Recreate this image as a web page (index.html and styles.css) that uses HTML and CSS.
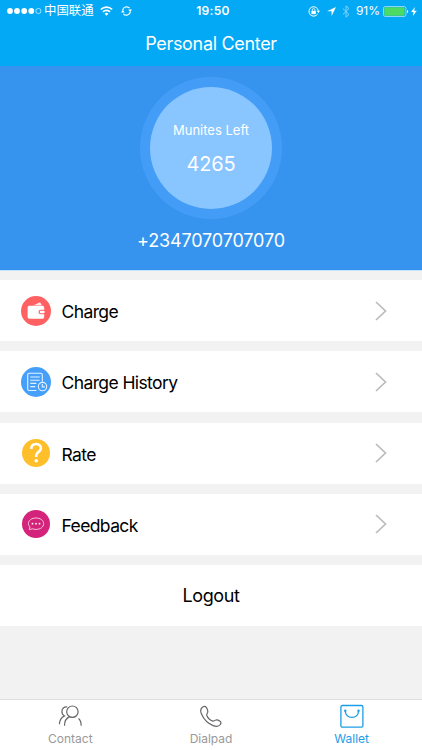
FILE: index.html
```html
<!DOCTYPE html>
<html lang="en">
<head>
    <meta charset="UTF-8">
    <meta name="viewport" content="width=device-width, initial-scale=1.0">
    <title>Personal Center</title>
    <link rel="stylesheet" href="styles.css">
</head>
<body>

<header class="header">
    <div class="status-bar">
        <div class="status-left">
            <svg class="signal" width="35" height="8" viewBox="0 0 35 8">
                <g fill="#fff">
                    <circle cx="3" cy="4" r="2.9"/>
                    <circle cx="10" cy="4" r="2.9"/>
                    <circle cx="17.2" cy="4" r="2.9"/>
                    <circle cx="24.3" cy="4" r="2.9"/>
                </g>
                <circle cx="31.4" cy="4" r="2.6" fill="none" stroke="#fff" stroke-width="0.6"/>
            </svg>
            <span class="carrier">中国联通</span>
            <svg class="wifi" width="13" height="10" viewBox="0 0 13 10">
                <g fill="none" stroke="#fff" stroke-width="1.7">
                    <path d="M0.8 3.5a8.2 8.2 0 0 1 11.4 0"/>
                    <path d="M2.9 5.9a5.1 5.1 0 0 1 7.2 0"/>
                </g>
                <path d="M6.5 9.7L4.6 7.7a2.7 2.7 0 0 1 3.8 0z" fill="#fff"/>
            </svg>
            <svg class="sync" width="11" height="10" viewBox="0 0 11 10">
                <g fill="none" stroke="#fff" stroke-width="1.2">
                    <path d="M1.6 4.3a4 4 0 0 1 7-2.100"/>
                    <path d="M9.400 5.700a4 4 0 0 1-7 2.100"/>
                </g>
                <path d="M7.2 3.600h3.800L9.200 6zM0 6.400h3.800L1.800 4z" fill="#fff"/>
            </svg>
        </div>
        <span class="time">19:50</span>
        <div class="status-right">
            <svg class="lock" width="12" height="11" viewBox="0 0 12 11">
                <path d="M9.600 8A4.700 4.700 0 1 1 10.300 4.800" fill="none" stroke="#fff" stroke-width="1"/>
                <path d="M8.600 4.800h3.400L10.300 7z" fill="#fff"/>
                <rect x="3.400" y="4.900" width="4.400" height="3.200" fill="#fff"/>
                <path d="M4.300 5V3.900a1.300 1.300 0 0 1 2.600 0V5" fill="none" stroke="#fff" stroke-width="0.8"/>
            </svg>
            <svg class="location" width="9" height="9" viewBox="0 0 9 9">
                <path d="M9 0L0 4.300h4.600V9z" fill="#fff"/>
            </svg>
            <svg class="bluetooth" width="8" height="13" viewBox="0 0 8 13">
                <path d="M0.8 3.500l6.200 6-3 2.700V0.800l3 2.700-6.200 6" fill="none" stroke="#fff" stroke-width="1"/>
            </svg>
            <span class="percent">91%</span>
            <svg class="battery" width="26" height="11" viewBox="0 0 26 11">
                <rect x="0.5" y="0.5" width="22.4" height="10" rx="1.8" fill="none" stroke="#c5eaff" stroke-width="0.7"/>
                <rect x="1.3" y="1.3" width="20.2" height="8.4" rx="1" fill="#4cd964"/>
                <path d="M24 3.700a2 2 0 0 1 0 3.600z" fill="#fff"/>
            </svg>
            <svg class="bolt" width="6" height="9" viewBox="0 0 6 9">
                <path d="M3.800 0L0.100 5h2.400L1.800 9l4-5.200H3.200z" fill="#fff"/>
            </svg>
        </div>
    </div>
    <h1 class="title">Personal Center</h1>
</header>

<section class="account">
    <div class="ring">
        <div class="balance">
            <span class="balance-label">Munites Left</span>
            <span class="balance-value">4265</span>
        </div>
    </div>
    <p class="phone">+2347070707070</p>
</section>

<main class="menu">
    <a class="row">
        <svg class="row-icon" viewBox="0 0 30 30">
            <circle cx="15" cy="15" r="15" fill="#ff6163"/>
            <path d="M12.500 9.200l6.500-3 1.900 3z" fill="#fff" opacity="0.85"/>
            <path d="M8.300 9.800h13.200a1.700 1.700 0 0 1 1.700 1.700v2.200h-3.400a2.300 2.300 0 0 0 0 4.600h3.400v2.800a1.700 1.700 0 0 1-1.700 1.700H8.300a1.700 1.700 0 0 1-1.700-1.700v-9.600a1.700 1.700 0 0 1 1.700-1.700z" fill="#fff"/>
            <rect x="18.700" y="14.700" width="5" height="2.600" rx="1.300" fill="#fff"/>
        </svg>
        <span class="row-text">Charge</span>
        <svg class="arrow" viewBox="0 0 12 20"><path d="M1 1l9.500 9L1 19"/></svg>
    </a>
    <a class="row">
        <svg class="row-icon" viewBox="0 0 30 30">
            <circle cx="15" cy="15" r="15" fill="#469ff9"/>
            <g fill="none" stroke="#e4f2ff" stroke-width="1.100">
                <path d="M15.500 23.500H8.200a1.500 1.500 0 0 1-1.500-1.500V7.700a1.500 1.500 0 0 1 1.500-1.500h11.600a1.500 1.500 0 0 1 1.500 1.500v7"/>
                <path d="M9.300 10h9.400M9.300 13.200h9.400M9.300 16.400h6M9.300 19.600h5"/>
                <circle cx="21.500" cy="19.600" r="4.200"/>
                <path d="M21.300 17v2.900h2.600"/>
            </g>
        </svg>
        <span class="row-text">Charge History</span>
        <svg class="arrow" viewBox="0 0 12 20"><path d="M1 1l9.500 9L1 19"/></svg>
    </a>
    <a class="row">
        <svg class="row-icon" viewBox="0 0 30 30">
            <circle cx="15" cy="15" r="14" fill="#ffbf2b"/>
            <path d="M10.300 11c0-3.400 2-5 4.800-5s4.800 1.700 4.800 4.300c0 3.600-4.700 3.800-4.700 7.300v1.400" fill="none" stroke="#fff" stroke-width="2.600"/>
            <circle cx="15.200" cy="22.800" r="1.800" fill="#fff"/>
        </svg>
        <span class="row-text">Rate</span>
        <svg class="arrow" viewBox="0 0 12 20"><path d="M1 1l9.500 9L1 19"/></svg>
    </a>
    <a class="row">
        <svg class="row-icon" viewBox="0 0 30 30">
            <circle cx="15" cy="15" r="14" fill="#d4237a"/>
            <path d="M8.400 20.600l.5-2.800C7.900 16.800 7.400 15.800 7.400 14.600 7.400 11.300 10.600 9 15 9s7.600 2.300 7.600 5.700S19.400 20.400 15 20.400c-1.300 0-2.400-.2-3.500-.6z" fill="none" stroke="#fbd5e7" stroke-width="0.9"/>
            <g fill="#fff">
                <circle cx="11.500" cy="14.700" r="0.900"/>
                <circle cx="15" cy="14.700" r="0.900"/>
                <circle cx="18.500" cy="14.700" r="0.900"/>
            </g>
        </svg>
        <span class="row-text">Feedback</span>
        <svg class="arrow" viewBox="0 0 12 20"><path d="M1 1l9.500 9L1 19"/></svg>
    </a>
    <a class="row logout">Logout</a>
</main>

<nav class="tab-bar">
    <a class="tab">
        <svg class="tab-icon" width="26" height="24" viewBox="0 0 26 24">
            <g fill="none" stroke="#666" stroke-width="1.2">
                <circle cx="15.400" cy="7.700" r="5.700"/>
                <path d="M10.200 3c-3.200-.5-5.300 1.600-5.300 4.400 0 2.200 1 3.600 2.600 4.500-3 1.400-4.900 4.300-5.100 8.400"/>
                <path d="M12.500 12.900c-3.300 1.200-5 4.300-5 8.900M21.600 14.500c1.700 1.500 2.600 4 2.600 7.300"/>
            </g>
        </svg>
        <span>Contact</span>
    </a>
    <a class="tab">
        <svg class="tab-icon" width="26" height="24" viewBox="0 0 26 24">
            <path d="M5 2.800C2.500 4.200 2 6.500 3.500 10c2.200 5 6.800 9.700 11.700 11.600 3.200 1.200 5.700.9 7.100-1.100 1-1.400.9-2.400-.3-3.300-1.500-1-2.900-1.500-4.200-1.200-1.300.2-1.700 1.500-3 1.100-2.400-.8-5-3.300-6-5.700-.5-1.300.6-1.900.9-3.200.3-1.500-.3-3.300-1.400-4.800C7.300 2 6.300 2 5 2.800z" fill="none" stroke="#666" stroke-width="1.2"/>
        </svg>
        <span>Dialpad</span>
    </a>
    <a class="tab active">
        <svg class="tab-icon" width="26" height="24" viewBox="0 0 26 24">
            <g fill="none" stroke="#1c9de8" stroke-width="1.300">
                <rect x="1.900" y="1.500" width="22" height="21.700" rx="1.500"/>
                <path d="M6.200 7c.4 3.900 3 6.400 6.700 6.400s6.300-2.500 6.700-6.400"/>
            </g>
            <circle cx="6.300" cy="6.700" r="1.200" fill="#1c9de8"/>
            <circle cx="19.500" cy="6.700" r="1.200" fill="#1c9de8"/>
        </svg>
        <span>Wallet</span>
    </a>
</nav>

</body>
</html>
```
FILE: styles.css
```css
body {
    margin: 0;
    height: 750px;
    display: flex;
    flex-direction: column;
    overflow: hidden;
    font-family: Inter, "Noto Sans CJK SC", sans-serif;
    background-color: #f2f2f2;
    color: #000;
}
svg {
    display: block;
    flex: none;
}
.header {
    height: 66px;
    background-color: #03a9f5;
    color: #fff;
}
.status-bar {
    height: 22px;
    display: grid;
    grid-template-columns: 1fr auto 1fr;
    align-items: center;
    padding: 0 5px 0 7px;
    font-size: 12px;
    line-height: 22px;
}
.status-left,
.status-right {
    display: flex;
    align-items: center;
}
.status-right {
    justify-content: flex-end;
}
.carrier {
    margin-left: 2px;
    font-size: 12.4px;
}
.wifi {
    margin-left: 6px;
}
.sync {
    margin-left: 8px;
}
.time {
    padding-left: 2px;
    font-weight: 600;
    letter-spacing: 0.3px;
}
.location {
    margin-left: 7px;
}
.bluetooth {
    margin-left: 6px;
    opacity: 0.5;
}
.percent {
    margin-left: 6px;
}
.battery {
    margin-left: 3px;
}
.bolt {
    margin-left: 2px;
}
.title {
    margin: 0;
    font-size: 18px;
    font-weight: 400;
    line-height: 43px;
    letter-spacing: -0.32px;
    text-align: center;
}
.account {
    height: 204px;
    display: flex;
    flex-direction: column;
    align-items: center;
    background-color: #3794ee;
    border-bottom: 1px solid #c5e2fc;
    color: #fff;
}
.ring {
    margin-top: 11px;
    padding: 10px;
    border-radius: 50%;
    background-color: #439df6;
}
.balance {
    width: 122px;
    height: 122px;
    display: flex;
    flex-direction: column;
    align-items: center;
    border-radius: 50%;
    background-color: #89c5ff;
}
.balance-label {
    margin-top: 33px;
    font-size: 13px;
    line-height: 20px;
}
.balance-value {
    margin-top: 9px;
    font-size: 20px;
    line-height: 30px;
    letter-spacing: -0.2px;
}
.phone {
    margin: 9px 0 0;
    font-size: 18px;
    line-height: 26px;
    letter-spacing: -0.15px;
}
.menu {
    display: flex;
    flex-direction: column;
    gap: 10.3px;
    padding-top: 9px;
}
.row {
    height: 61px;
    display: flex;
    align-items: center;
    padding: 0 35px 0 21px;
    background-color: #fff;
    font-size: 17.5px;
    letter-spacing: -0.6px;
}
.row-icon {
    width: 30px;
    height: 30px;
}
.row-text {
    flex: 1;
    margin-left: 10.5px;
    padding-top: 2px;
}
.arrow {
    width: 12px;
    height: 20px;
    fill: none;
    stroke: #bbb;
    stroke-width: 1.7;
}
.logout {
    justify-content: center;
    padding: 0;
    font-size: 18px;
    letter-spacing: -0.35px;
}
.tab-bar {
    height: 51px;
    margin-top: auto;
    display: flex;
    box-sizing: border-box;
    border-top: 1px solid #dedede;
    background-color: #fff;
}
.tab {
    flex: 1;
    display: flex;
    flex-direction: column;
    align-items: center;
    padding-top: 4px;
    color: #999;
    font-size: 12px;
}
.tab span {
    margin-top: 3px;
    line-height: 16px;
}
.tab.active {
    color: #1c9de8;
}
```
